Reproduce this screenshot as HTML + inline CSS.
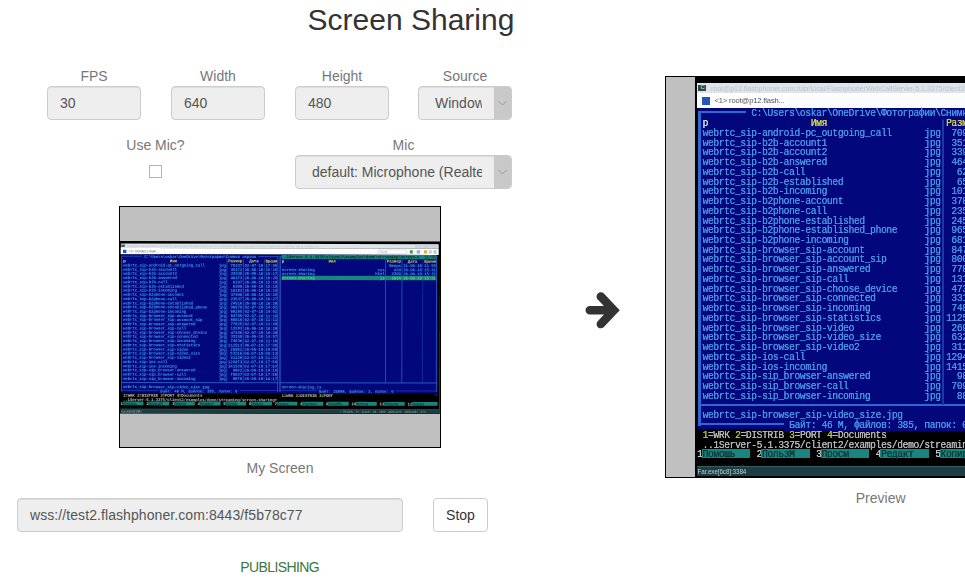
<!DOCTYPE html>
<html><head><meta charset="utf-8">
<style>
html,body{margin:0;padding:0;background:#fff;width:965px;height:585px;overflow:hidden;}
body{position:relative;font-family:"Liberation Sans",sans-serif;font-size:14px;color:#333;}
.a{position:absolute;white-space:nowrap;}
.lbl{position:absolute;color:#777;font-size:14px;line-height:20px;text-align:center;width:200px;}
.inp{position:absolute;box-sizing:border-box;height:34px;border:1px solid #ccc;border-radius:4px;background:#eee;color:#555;font-size:14px;line-height:32px;padding-left:12px;overflow:hidden;white-space:nowrap;box-shadow:inset 0 1px 1px rgba(0,0,0,.075);}
.sel{padding-left:16px;}
.sel .arr{position:absolute;right:0;top:0;width:17px;height:32px;background:#c9c9c9;border-radius:0 3px 3px 0;}
.sel .txt{position:absolute;left:16px;top:0;overflow:hidden;}
.box{position:absolute;border:1px solid #000;background:#c0c0c0;overflow:hidden;}
.scr{position:absolute;left:0;top:0;width:742px;height:400px;background:#000;transform-origin:0 0;overflow:hidden;}
.scr i,.scr b,.scr u{position:absolute;display:block;font-style:normal;text-decoration:none;white-space:pre;}
.scr i{font-family:"Liberation Mono",monospace;font-size:9.6px;letter-spacing:-0.35px;line-height:10.6px;height:9.73px;font-weight:normal;text-shadow:0.2px 0 0 currentColor;transform:scaleY(1.12);transform-origin:0 55%;}
.sm i{font-weight:bold;text-shadow:none;transform:none;text-rendering:geometricPrecision;}
.scr u{font-family:"Liberation Sans",sans-serif;}
</style></head><body>
<div class="a" style="left:0;top:3px;width:822px;text-align:center;font-size:30px;line-height:33px;color:#333">Screen Sharing</div>

<div class="lbl" style="left:-6px;top:66px">FPS</div>
<div class="lbl" style="left:118px;top:66px">Width</div>
<div class="lbl" style="left:242px;top:66px">Height</div>
<div class="lbl" style="left:365px;top:66px">Source</div>
<div class="inp" style="left:47px;top:86px;width:94px">30</div>
<div class="inp" style="left:171px;top:86px;width:94px">640</div>
<div class="inp" style="left:295px;top:86px;width:94px">480</div>
<div class="inp sel" style="left:418px;top:86px;width:94px"><span class="txt" style="width:47px">Window</span><span class="arr"><svg width="17" height="32" style="position:absolute;left:0;top:0"><path d="M4.5 14 L8.5 18 L12.5 14" fill="none" stroke="#9a9a9a" stroke-width="1"/></svg></span></div>

<div class="lbl" style="left:55.5px;top:135px">Use Mic?</div>
<div class="lbl" style="left:303.5px;top:135px">Mic</div>
<div class="a" style="left:149px;top:165px;width:11px;height:11px;border:1px solid #b4b4b4;background:#fff"></div>
<div class="inp sel" style="left:295px;top:155px;width:217px"><span class="txt" style="width:170px">default: Microphone (Realtek High Definition Audio)</span><span class="arr"><svg width="17" height="32" style="position:absolute;left:0;top:0"><path d="M4.5 14 L8.5 18 L12.5 14" fill="none" stroke="#9a9a9a" stroke-width="1"/></svg></span></div>

<div class="box" style="left:119px;top:206px;width:320px;height:240px">
<div style="position:absolute;left:0;top:0;width:320px;height:240px;filter:blur(0.2px)"><div class="scr sm" style="top:33.75px;transform:scale(0.43127) rotate(0.1deg)"><b style="left:1.50px;top:5.50px;width:737.50px;height:10.50px;background:#dde4ea"></b><b style="left:3.20px;top:7.50px;width:8.00px;height:6.50px;background:#2a4a48"></b><u style="left:5.5px;top:7.2px;color:#d0e0e0;font-size:6px;line-height:7px">C</u><u style="left:16px;top:7px;color:#bcc4cc;font-size:7px;line-height:9px">root@p12.flashphoner.com:/usr/local/FlashphonerWebCallServer-5.1.3375/client2/examples/demo/streaming/screen-sharing - Far 3.0.4545 x64</u><b style="left:684.00px;top:7.00px;width:16.00px;height:8.00px;background:#c8d4de"></b><b style="left:702.00px;top:7.00px;width:16.00px;height:8.00px;background:#c8d4de"></b><b style="left:720.00px;top:7.00px;width:16.00px;height:8.00px;background:#c8d4de"></b><b style="left:1.50px;top:16.00px;width:737.50px;height:15.00px;background:#fbfcfd"></b><b style="left:1.50px;top:16.00px;width:91.00px;height:15.00px;background:#ffffff"></b><b style="left:6.70px;top:20.00px;width:8.00px;height:8.00px;background:#2456c0"></b><u style="left:19.5px;top:19px;color:#50555c;font-size:7.6px;line-height:10px;letter-spacing:-0.15px">&lt;1&gt; root@p12.flash...</u><b style="left:598.00px;top:19.00px;width:67.00px;height:10.00px;background:#ffffff"></b><b style="left:598px;top:19px;width:65px;height:8px;border:1px solid #b8c0c8;background:#fff"></b><u style="left:601px;top:19px;color:#888;font-size:7px;line-height:9px">Поиск</u><b style="left:672.00px;top:20.00px;width:7.00px;height:8.00px;background:#3aa040"></b><b style="left:688.00px;top:20.00px;width:8.00px;height:8.00px;background:#8fb0d8"></b><b style="left:705.00px;top:20.00px;width:7.00px;height:8.00px;background:#e0b040"></b><b style="left:716.00px;top:20.00px;width:7.00px;height:8.00px;background:#c8ccd4"></b><b style="left:727.00px;top:20.00px;width:7.00px;height:8.00px;background:#a8c8e8"></b><b style="left:2.50px;top:31.30px;width:734.55px;height:321.09px;background:#02087c"></b><b style="left:2.50px;top:35.16px;width:2.30px;height:313.36px;background:#2858c0"></b><b style="left:364.98px;top:35.16px;width:2.30px;height:313.36px;background:#2858c0"></b><b style="left:2.50px;top:34.37px;width:365.47px;height:1.61px;background:#2858c0"></b><b style="left:2.50px;top:345.53px;width:365.47px;height:1.95px;background:#2858c0"></b><b style="left:2.50px;top:327.07px;width:365.47px;height:1.76px;background:#2858c0"></b><b style="left:247.16px;top:41.03px;width:1.60px;height:287.04px;background:#2850c0"></b><b style="left:285.02px;top:41.03px;width:1.60px;height:287.04px;background:#2850c0"></b><b style="left:333.71px;top:41.03px;width:1.60px;height:287.04px;background:#2850c0"></b><b style="left:370.38px;top:35.16px;width:2.30px;height:313.36px;background:#2858c0"></b><b style="left:732.86px;top:35.16px;width:2.30px;height:313.36px;background:#2858c0"></b><b style="left:370.38px;top:34.37px;width:365.47px;height:1.61px;background:#2858c0"></b><b style="left:370.38px;top:345.53px;width:365.47px;height:1.95px;background:#2858c0"></b><b style="left:370.38px;top:327.07px;width:365.47px;height:1.76px;background:#2858c0"></b><b style="left:615.04px;top:41.03px;width:1.60px;height:287.04px;background:#2850c0"></b><b style="left:652.91px;top:41.03px;width:1.60px;height:287.04px;background:#2850c0"></b><b style="left:701.60px;top:41.03px;width:1.60px;height:287.04px;background:#2850c0"></b><i style="left:50.79px;top:32.30px;color:#3f90ea;background:#02087c;"> C:\Users\oskar\OneDrive\Фотографии\Снимки экрана </i><i style="left:7.51px;top:42.05px;color:#d8dde6;">р</i><i style="left:115.71px;top:42.05px;color:#d6d24a;">Имя</i><i style="left:250.96px;top:42.05px;color:#d6d24a;">Размер</i><i style="left:299.65px;top:42.05px;color:#d6d24a;">Дата</i><i style="left:337.52px;top:42.05px;color:#d6d24a;">Время</i><i style="left:7.51px;top:51.79px;color:#3f90ea;">webrtc_sip-android-pc_outgoing_call</i><i style="left:229.32px;top:51.79px;color:#3f90ea;">jpg</i><i style="left:250.96px;top:51.79px;color:#3f90ea;"> 70937</i><i style="left:288.83px;top:51.79px;color:#3f90ea;">02-07-18</i><i style="left:337.52px;top:51.79px;color:#3f90ea;">17:56</i><i style="left:7.51px;top:61.54px;color:#3f90ea;">webrtc_sip-b2b-account1</i><i style="left:229.32px;top:61.54px;color:#3f90ea;">jpg</i><i style="left:250.96px;top:61.54px;color:#3f90ea;"> 35172</i><i style="left:288.83px;top:61.54px;color:#3f90ea;">26-06-18</i><i style="left:337.52px;top:61.54px;color:#3f90ea;">15:16</i><i style="left:7.51px;top:71.28px;color:#3f90ea;">webrtc_sip-b2b-account2</i><i style="left:229.32px;top:71.28px;color:#3f90ea;">jpg</i><i style="left:250.96px;top:71.28px;color:#3f90ea;"> 33930</i><i style="left:288.83px;top:71.28px;color:#3f90ea;">26-06-18</i><i style="left:337.52px;top:71.28px;color:#3f90ea;">15:17</i><i style="left:7.51px;top:81.03px;color:#3f90ea;">webrtc_sip-b2b-answered</i><i style="left:229.32px;top:81.03px;color:#3f90ea;">jpg</i><i style="left:250.96px;top:81.03px;color:#3f90ea;"> 46473</i><i style="left:288.83px;top:81.03px;color:#3f90ea;">26-06-18</i><i style="left:337.52px;top:81.03px;color:#3f90ea;">16:20</i><i style="left:7.51px;top:90.77px;color:#3f90ea;">webrtc_sip-b2b-call</i><i style="left:229.32px;top:90.77px;color:#3f90ea;">jpg</i><i style="left:250.96px;top:90.77px;color:#3f90ea;">  6297</i><i style="left:288.83px;top:90.77px;color:#3f90ea;">26-06-18</i><i style="left:337.52px;top:90.77px;color:#3f90ea;">15:18</i><i style="left:7.51px;top:100.52px;color:#3f90ea;">webrtc_sip-b2b-established</i><i style="left:229.32px;top:100.52px;color:#3f90ea;">jpg</i><i style="left:250.96px;top:100.52px;color:#3f90ea;">  6599</i><i style="left:288.83px;top:100.52px;color:#3f90ea;">26-06-18</i><i style="left:337.52px;top:100.52px;color:#3f90ea;">15:19</i><i style="left:7.51px;top:110.27px;color:#3f90ea;">webrtc_sip-b2b-incoming</i><i style="left:229.32px;top:110.27px;color:#3f90ea;">jpg</i><i style="left:250.96px;top:110.27px;color:#3f90ea;"> 10183</i><i style="left:288.83px;top:110.27px;color:#3f90ea;">26-06-18</i><i style="left:337.52px;top:110.27px;color:#3f90ea;">15:19</i><i style="left:7.51px;top:120.01px;color:#3f90ea;">webrtc_sip-b2phone-account</i><i style="left:229.32px;top:120.01px;color:#3f90ea;">jpg</i><i style="left:250.96px;top:120.01px;color:#3f90ea;"> 37896</i><i style="left:288.83px;top:120.01px;color:#3f90ea;">26-06-18</i><i style="left:337.52px;top:120.01px;color:#3f90ea;">16:25</i><i style="left:7.51px;top:129.76px;color:#3f90ea;">webrtc_sip-b2phone-call</i><i style="left:229.32px;top:129.76px;color:#3f90ea;">jpg</i><i style="left:250.96px;top:129.76px;color:#3f90ea;"> 23537</i><i style="left:288.83px;top:129.76px;color:#3f90ea;">26-06-18</i><i style="left:337.52px;top:129.76px;color:#3f90ea;">16:27</i><i style="left:7.51px;top:139.50px;color:#3f90ea;">webrtc_sip-b2phone-established</i><i style="left:229.32px;top:139.50px;color:#3f90ea;">jpg</i><i style="left:250.96px;top:139.50px;color:#3f90ea;"> 24516</i><i style="left:288.83px;top:139.50px;color:#3f90ea;">26-06-18</i><i style="left:337.52px;top:139.50px;color:#3f90ea;">16:28</i><i style="left:7.51px;top:149.25px;color:#3f90ea;">webrtc_sip-b2phone-established_phone</i><i style="left:229.32px;top:149.25px;color:#3f90ea;">jpg</i><i style="left:250.96px;top:149.25px;color:#3f90ea;"> 96579</i><i style="left:288.83px;top:149.25px;color:#3f90ea;">02-07-18</i><i style="left:337.52px;top:149.25px;color:#3f90ea;">14:02</i><i style="left:7.51px;top:158.99px;color:#3f90ea;">webrtc_sip-b2phone-incoming</i><i style="left:229.32px;top:158.99px;color:#3f90ea;">jpg</i><i style="left:250.96px;top:158.99px;color:#3f90ea;"> 68185</i><i style="left:288.83px;top:158.99px;color:#3f90ea;">02-07-18</i><i style="left:337.52px;top:158.99px;color:#3f90ea;">14:02</i><i style="left:7.51px;top:168.74px;color:#3f90ea;">webrtc_sip-browser_sip-account</i><i style="left:229.32px;top:168.74px;color:#3f90ea;">jpg</i><i style="left:250.96px;top:168.74px;color:#3f90ea;"> 84796</i><i style="left:288.83px;top:168.74px;color:#3f90ea;">02-07-18</i><i style="left:337.52px;top:168.74px;color:#3f90ea;">11:10</i><i style="left:7.51px;top:178.48px;color:#3f90ea;">webrtc_sip-browser_sip-account_sip</i><i style="left:229.32px;top:178.48px;color:#3f90ea;">jpg</i><i style="left:250.96px;top:178.48px;color:#3f90ea;"> 80016</i><i style="left:288.83px;top:178.48px;color:#3f90ea;">02-07-18</i><i style="left:337.52px;top:178.48px;color:#3f90ea;">11:11</i><i style="left:7.51px;top:188.23px;color:#3f90ea;">webrtc_sip-browser_sip-answered</i><i style="left:229.32px;top:188.23px;color:#3f90ea;">jpg</i><i style="left:250.96px;top:188.23px;color:#3f90ea;"> 77825</i><i style="left:288.83px;top:188.23px;color:#3f90ea;">02-07-18</i><i style="left:337.52px;top:188.23px;color:#3f90ea;">11:28</i><i style="left:7.51px;top:197.98px;color:#3f90ea;">webrtc_sip-browser_sip-call</i><i style="left:229.32px;top:197.98px;color:#3f90ea;">jpg</i><i style="left:250.96px;top:197.98px;color:#3f90ea;"> 13183</i><i style="left:288.83px;top:197.98px;color:#3f90ea;">26-06-18</i><i style="left:337.52px;top:197.98px;color:#3f90ea;">10:28</i><i style="left:7.51px;top:207.72px;color:#3f90ea;">webrtc_sip-browser_sip-choose_device</i><i style="left:229.32px;top:207.72px;color:#3f90ea;">jpg</i><i style="left:250.96px;top:207.72px;color:#3f90ea;"> 47356</i><i style="left:288.83px;top:207.72px;color:#3f90ea;">02-07-18</i><i style="left:337.52px;top:207.72px;color:#3f90ea;">10:28</i><i style="left:7.51px;top:217.47px;color:#3f90ea;">webrtc_sip-browser_sip-connected</i><i style="left:229.32px;top:217.47px;color:#3f90ea;">jpg</i><i style="left:250.96px;top:217.47px;color:#3f90ea;"> 33150</i><i style="left:288.83px;top:217.47px;color:#3f90ea;">26-06-18</i><i style="left:337.52px;top:217.47px;color:#3f90ea;">14:57</i><i style="left:7.51px;top:227.21px;color:#3f90ea;">webrtc_sip-browser_sip-incoming</i><i style="left:229.32px;top:227.21px;color:#3f90ea;">jpg</i><i style="left:250.96px;top:227.21px;color:#3f90ea;"> 74836</i><i style="left:288.83px;top:227.21px;color:#3f90ea;">02-07-18</i><i style="left:337.52px;top:227.21px;color:#3f90ea;">11:16</i><i style="left:7.51px;top:236.96px;color:#3f90ea;">webrtc_sip-browser_sip-statistics</i><i style="left:229.32px;top:236.96px;color:#3f90ea;">jpg</i><i style="left:250.96px;top:236.96px;color:#3f90ea;">112513</i><i style="left:288.83px;top:236.96px;color:#3f90ea;">06-07-18</i><i style="left:337.52px;top:236.96px;color:#3f90ea;">17:36</i><i style="left:7.51px;top:246.70px;color:#3f90ea;">webrtc_sip-browser_sip-video</i><i style="left:229.32px;top:246.70px;color:#3f90ea;">jpg</i><i style="left:250.96px;top:246.70px;color:#3f90ea;"> 26982</i><i style="left:288.83px;top:246.70px;color:#3f90ea;">26-06-18</i><i style="left:337.52px;top:246.70px;color:#3f90ea;">10:09</i><i style="left:7.51px;top:256.45px;color:#3f90ea;">webrtc_sip-browser_sip-video_size</i><i style="left:229.32px;top:256.45px;color:#3f90ea;">jpg</i><i style="left:250.96px;top:256.45px;color:#3f90ea;"> 63216</i><i style="left:288.83px;top:256.45px;color:#3f90ea;">06-07-18</i><i style="left:337.52px;top:256.45px;color:#3f90ea;">09:13</i><i style="left:7.51px;top:266.19px;color:#3f90ea;">webrtc_sip-browser_sip-video2</i><i style="left:229.32px;top:266.19px;color:#3f90ea;">jpg</i><i style="left:250.96px;top:266.19px;color:#3f90ea;"> 31138</i><i style="left:288.83px;top:266.19px;color:#3f90ea;">02-07-18</i><i style="left:337.52px;top:266.19px;color:#3f90ea;">11:32</i><i style="left:7.51px;top:275.94px;color:#3f90ea;">webrtc_sip-ios-call</i><i style="left:229.32px;top:275.94px;color:#3f90ea;">jpg</i><i style="left:250.96px;top:275.94px;color:#3f90ea;">129473</i><i style="left:288.83px;top:275.94px;color:#3f90ea;">02-07-18</i><i style="left:337.52px;top:275.94px;color:#3f90ea;">17:56</i><i style="left:7.51px;top:285.69px;color:#3f90ea;">webrtc_sip-ios-incoming</i><i style="left:229.32px;top:285.69px;color:#3f90ea;">jpg</i><i style="left:250.96px;top:285.69px;color:#3f90ea;">141530</i><i style="left:288.83px;top:285.69px;color:#3f90ea;">02-07-18</i><i style="left:337.52px;top:285.69px;color:#3f90ea;">17:57</i><i style="left:7.51px;top:295.43px;color:#3f90ea;">webrtc_sip-sip_browser-answered</i><i style="left:229.32px;top:295.43px;color:#3f90ea;">jpg</i><i style="left:250.96px;top:295.43px;color:#3f90ea;">  9842</i><i style="left:288.83px;top:295.43px;color:#3f90ea;">26-06-18</i><i style="left:337.52px;top:295.43px;color:#3f90ea;">10:16</i><i style="left:7.51px;top:305.18px;color:#3f90ea;">webrtc_sip-sip_browser-call</i><i style="left:229.32px;top:305.18px;color:#3f90ea;">jpg</i><i style="left:250.96px;top:305.18px;color:#3f90ea;"> 70937</i><i style="left:288.83px;top:305.18px;color:#3f90ea;">02-07-18</i><i style="left:337.52px;top:305.18px;color:#3f90ea;">17:56</i><i style="left:7.51px;top:314.92px;color:#3f90ea;">webrtc_sip-sip_browser-incoming</i><i style="left:229.32px;top:314.92px;color:#3f90ea;">jpg</i><i style="left:250.96px;top:314.92px;color:#3f90ea;">  8879</i><i style="left:288.83px;top:314.92px;color:#3f90ea;">26-06-18</i><i style="left:337.52px;top:314.92px;color:#3f90ea;">10:17</i><i style="left:7.51px;top:334.41px;color:#3f90ea;">webrtc_sip-browser_sip-video_size.jpg</i><i style="left:88.66px;top:344.16px;color:#3f90ea;background:#02087c;"> Байт: 46 М, файлов: 385, папок: 0 </i><b style="left:374.59px;top:31.30px;width:359.76px;height:9.73px;background:#1a847e"></b><i style="left:375.39px;top:32.30px;color:#062a28;"> …1Server-5.1.3375\client2\examples\demo\streaming\screen-s </i><i style="left:705.40px;top:32.30px;color:#0a3a38;">11:55</i><i style="left:375.39px;top:42.05px;color:#d8dde6;">р</i><i style="left:483.59px;top:42.05px;color:#d6d24a;">Имя</i><i style="left:618.84px;top:42.05px;color:#d6d24a;">Размер</i><i style="left:667.53px;top:42.05px;color:#d6d24a;">Дата</i><i style="left:705.40px;top:42.05px;color:#d6d24a;">Время</i><i style="left:375.39px;top:51.79px;color:#3f90ea;">..</i><i style="left:618.84px;top:51.79px;color:#3f90ea;"> Вверх</i><i style="left:656.71px;top:51.79px;color:#3f90ea;">21-06-18</i><i style="left:705.40px;top:51.79px;color:#3f90ea;">11:55</i><i style="left:375.39px;top:61.54px;color:#3f90ea;">screen-sharing</i><i style="left:597.20px;top:61.54px;color:#3f90ea;">css</i><i style="left:618.84px;top:61.54px;color:#3f90ea;">   434</i><i style="left:656.71px;top:61.54px;color:#3f90ea;">26-06-18</i><i style="left:705.40px;top:61.54px;color:#3f90ea;">15:31</i><i style="left:375.39px;top:71.28px;color:#3f90ea;">screen-sharing</i><i style="left:591.79px;top:71.28px;color:#3f90ea;">html</i><i style="left:618.84px;top:71.28px;color:#3f90ea;">  2300</i><i style="left:656.71px;top:71.28px;color:#3f90ea;">26-06-18</i><i style="left:705.40px;top:71.28px;color:#3f90ea;">15:31</i><b style="left:374.59px;top:79.95px;width:357.06px;height:9.73px;background:#1a847e"></b><i style="left:375.39px;top:81.03px;color:#58d068;">screen-sharing</i><i style="left:602.61px;top:81.03px;color:#58d068;">js</i><i style="left:618.84px;top:81.03px;color:#58d068;">  5654</i><i style="left:656.71px;top:81.03px;color:#58d068;">26-06-18</i><i style="left:705.40px;top:81.03px;color:#58d068;">15:31</i><i style="left:375.39px;top:334.41px;color:#3f90ea;">screen-sharing.js</i><i style="left:456.54px;top:344.16px;color:#3f90ea;background:#02087c;"> Байт: 15888, файлов: 3, папок: 0 </i><i style="left:7.51px;top:353.91px;color:#c4bc3c;">1</i><i style="left:12.92px;top:353.91px;color:#b8b8b8;">=WRK </i><i style="left:39.97px;top:353.91px;color:#c4bc3c;">2</i><i style="left:45.38px;top:353.91px;color:#b8b8b8;">=DISTRIB </i><i style="left:94.07px;top:353.91px;color:#c4bc3c;">3</i><i style="left:99.48px;top:353.91px;color:#b8b8b8;">=PORT </i><i style="left:131.94px;top:353.91px;color:#c4bc3c;">4</i><i style="left:137.35px;top:353.91px;color:#b8b8b8;">=Documents</i><i style="left:375.39px;top:353.91px;color:#c4bc3c;">1</i><i style="left:380.80px;top:353.91px;color:#b8b8b8;">=WRK </i><i style="left:407.85px;top:353.91px;color:#c4bc3c;">2</i><i style="left:413.26px;top:353.91px;color:#b8b8b8;">=DISTRIB </i><i style="left:461.95px;top:353.91px;color:#c4bc3c;">3</i><i style="left:467.36px;top:353.91px;color:#b8b8b8;">=PORT </i><i style="left:7.51px;top:363.65px;color:#b8b8b8;">..1Server-5.1.3375/client2/examples/demo/streaming/screen-sharing&gt;</i><i style="left:2.10px;top:373.40px;color:#c8c8c8;">1</i><b style="left:6.71px;top:372.35px;width:48.69px;height:8.73px;background:#1a847e"></b><i style="left:7.51px;top:373.40px;color:#0a3a38;">Помощь</i><i style="left:61.61px;top:373.40px;color:#c8c8c8;">2</i><b style="left:66.22px;top:372.35px;width:48.69px;height:8.73px;background:#1a847e"></b><i style="left:67.02px;top:373.40px;color:#0a3a38;">ПользМ</i><i style="left:121.12px;top:373.40px;color:#c8c8c8;">3</i><b style="left:125.73px;top:372.35px;width:48.69px;height:8.73px;background:#1a847e"></b><i style="left:126.53px;top:373.40px;color:#0a3a38;">Просм</i><i style="left:180.63px;top:373.40px;color:#c8c8c8;">4</i><b style="left:185.24px;top:372.35px;width:48.69px;height:8.73px;background:#1a847e"></b><i style="left:186.04px;top:373.40px;color:#0a3a38;">Редакт</i><i style="left:240.14px;top:373.40px;color:#c8c8c8;">5</i><b style="left:244.75px;top:372.35px;width:48.69px;height:8.73px;background:#1a847e"></b><i style="left:245.55px;top:373.40px;color:#0a3a38;">Копир</i><i style="left:299.65px;top:373.40px;color:#c8c8c8;">6</i><b style="left:304.26px;top:372.35px;width:48.69px;height:8.73px;background:#1a847e"></b><i style="left:305.06px;top:373.40px;color:#0a3a38;">Перен</i><i style="left:359.16px;top:373.40px;color:#c8c8c8;">7</i><b style="left:363.77px;top:372.35px;width:48.69px;height:8.73px;background:#1a847e"></b><i style="left:364.57px;top:373.40px;color:#0a3a38;">Папка</i><i style="left:418.67px;top:373.40px;color:#c8c8c8;">8</i><b style="left:423.28px;top:372.35px;width:48.69px;height:8.73px;background:#1a847e"></b><i style="left:424.08px;top:373.40px;color:#0a3a38;">Удален</i><i style="left:478.18px;top:373.40px;color:#c8c8c8;">9</i><b style="left:482.79px;top:372.35px;width:48.69px;height:8.73px;background:#1a847e"></b><i style="left:483.59px;top:373.40px;color:#0a3a38;">КонфМн</i><i style="left:537.69px;top:373.40px;color:#c8c8c8;">10</i><b style="left:547.71px;top:372.35px;width:48.69px;height:8.73px;background:#1a847e"></b><i style="left:548.51px;top:373.40px;color:#0a3a38;">Выход</i><i style="left:602.61px;top:373.40px;color:#c8c8c8;">11</i><b style="left:612.63px;top:372.35px;width:48.69px;height:8.73px;background:#1a847e"></b><i style="left:613.43px;top:373.40px;color:#0a3a38;">Модули</i><i style="left:667.53px;top:373.40px;color:#c8c8c8;">12</i><b style="left:677.55px;top:372.35px;width:59.51px;height:8.73px;background:#1a847e"></b><i style="left:678.35px;top:373.40px;color:#0a3a38;">Экран</i><b style="left:732.00px;top:354.00px;width:3.00px;height:3.00px;background:#3050d0"></b><b style="left:1.50px;top:388.80px;width:740.50px;height:10.20px;background:#1c3d42"></b><b style="left:1.50px;top:388.80px;width:740.50px;height:1.00px;background:#345f66"></b><u style="left:2.5px;top:389.5px;color:#c0d0d4;font-size:6.3px;line-height:9px;letter-spacing:-0.1px">Far.exe[6c8]:3384</u><u style="left:511px;top:389.5px;color:#98b0b4;font-size:6.3px;line-height:9px;word-spacing:1.5px">« ОБЩИЕ  97  2x1137  96  1960  2820x1376  1960x1084  84%</u></div></div>
</div>
<div class="lbl" style="left:180px;top:458px">My Screen</div>

<svg class="a" style="left:580px;top:285px" width="50" height="50" viewBox="580 285 50 50"><path d="M589.8 310.3 L612 310.3 M600.8 296.5 L613.9 310.3 L600.8 324.1" fill="none" stroke="#333" stroke-width="8.5" stroke-linecap="round" stroke-linejoin="miter"/></svg>

<div class="box" style="left:665px;top:76px;width:800px;height:400px">
<div class="scr" style="left:29px;top:0;filter:blur(0.35px)"><b style="left:1.50px;top:5.50px;width:737.50px;height:10.50px;background:#dde4ea"></b><b style="left:3.20px;top:7.50px;width:8.00px;height:6.50px;background:#2a4a48"></b><u style="left:5.5px;top:7.2px;color:#d0e0e0;font-size:6px;line-height:7px">C</u><u style="left:16px;top:7px;color:#bcc4cc;font-size:7px;line-height:9px">root@p12.flashphoner.com:/usr/local/FlashphonerWebCallServer-5.1.3375/client2/examples/demo/streaming/screen-sharing - Far 3.0.4545 x64</u><b style="left:684.00px;top:7.00px;width:16.00px;height:8.00px;background:#c8d4de"></b><b style="left:702.00px;top:7.00px;width:16.00px;height:8.00px;background:#c8d4de"></b><b style="left:720.00px;top:7.00px;width:16.00px;height:8.00px;background:#c8d4de"></b><b style="left:1.50px;top:16.00px;width:737.50px;height:15.00px;background:#fbfcfd"></b><b style="left:1.50px;top:16.00px;width:91.00px;height:15.00px;background:#ffffff"></b><b style="left:6.70px;top:20.00px;width:8.00px;height:8.00px;background:#2456c0"></b><u style="left:19.5px;top:19px;color:#50555c;font-size:7.6px;line-height:10px;letter-spacing:-0.15px">&lt;1&gt; root@p12.flash...</u><b style="left:598.00px;top:19.00px;width:67.00px;height:10.00px;background:#ffffff"></b><b style="left:598px;top:19px;width:65px;height:8px;border:1px solid #b8c0c8;background:#fff"></b><u style="left:601px;top:19px;color:#888;font-size:7px;line-height:9px">Поиск</u><b style="left:672.00px;top:20.00px;width:7.00px;height:8.00px;background:#3aa040"></b><b style="left:688.00px;top:20.00px;width:8.00px;height:8.00px;background:#8fb0d8"></b><b style="left:705.00px;top:20.00px;width:7.00px;height:8.00px;background:#e0b040"></b><b style="left:716.00px;top:20.00px;width:7.00px;height:8.00px;background:#c8ccd4"></b><b style="left:727.00px;top:20.00px;width:7.00px;height:8.00px;background:#a8c8e8"></b><b style="left:2.50px;top:31.30px;width:734.55px;height:321.09px;background:#02087c"></b><b style="left:2.50px;top:35.16px;width:3.00px;height:313.36px;background:#2e68d8"></b><b style="left:364.98px;top:35.16px;width:3.00px;height:313.36px;background:#2e68d8"></b><b style="left:2.50px;top:34.37px;width:365.47px;height:2.10px;background:#2e68d8"></b><b style="left:2.50px;top:345.53px;width:365.47px;height:2.55px;background:#2e68d8"></b><b style="left:2.50px;top:327.07px;width:365.47px;height:2.42px;background:#2e68d8"></b><b style="left:246.86px;top:41.03px;width:2.20px;height:287.04px;background:#1c38a4"></b><b style="left:284.72px;top:41.03px;width:2.20px;height:287.04px;background:#1c38a4"></b><b style="left:333.41px;top:41.03px;width:2.20px;height:287.04px;background:#1c38a4"></b><b style="left:370.38px;top:35.16px;width:3.00px;height:313.36px;background:#2e68d8"></b><b style="left:732.86px;top:35.16px;width:3.00px;height:313.36px;background:#2e68d8"></b><b style="left:370.38px;top:34.37px;width:365.47px;height:2.10px;background:#2e68d8"></b><b style="left:370.38px;top:345.53px;width:365.47px;height:2.55px;background:#2e68d8"></b><b style="left:370.38px;top:327.07px;width:365.47px;height:2.42px;background:#2e68d8"></b><b style="left:614.74px;top:41.03px;width:2.20px;height:287.04px;background:#1c38a4"></b><b style="left:652.61px;top:41.03px;width:2.20px;height:287.04px;background:#1c38a4"></b><b style="left:701.29px;top:41.03px;width:2.20px;height:287.04px;background:#1c38a4"></b><i style="left:50.79px;top:32.30px;color:#4894e8;background:#02087c;"> C:\Users\oskar\OneDrive\Фотографии\Снимки экрана </i><i style="left:7.51px;top:42.05px;color:#d8dde6;">р</i><i style="left:115.71px;top:42.05px;color:#d6d24a;">Имя</i><i style="left:250.96px;top:42.05px;color:#d6d24a;">Размер</i><i style="left:299.65px;top:42.05px;color:#d6d24a;">Дата</i><i style="left:337.52px;top:42.05px;color:#d6d24a;">Время</i><i style="left:7.51px;top:51.79px;color:#4894e8;">webrtc_sip-android-pc_outgoing_call</i><i style="left:229.32px;top:51.79px;color:#4894e8;">jpg</i><i style="left:250.96px;top:51.79px;color:#4894e8;"> 70937</i><i style="left:288.83px;top:51.79px;color:#4894e8;">02-07-18</i><i style="left:337.52px;top:51.79px;color:#4894e8;">17:56</i><i style="left:7.51px;top:61.54px;color:#4894e8;">webrtc_sip-b2b-account1</i><i style="left:229.32px;top:61.54px;color:#4894e8;">jpg</i><i style="left:250.96px;top:61.54px;color:#4894e8;"> 35172</i><i style="left:288.83px;top:61.54px;color:#4894e8;">26-06-18</i><i style="left:337.52px;top:61.54px;color:#4894e8;">15:16</i><i style="left:7.51px;top:71.28px;color:#4894e8;">webrtc_sip-b2b-account2</i><i style="left:229.32px;top:71.28px;color:#4894e8;">jpg</i><i style="left:250.96px;top:71.28px;color:#4894e8;"> 33930</i><i style="left:288.83px;top:71.28px;color:#4894e8;">26-06-18</i><i style="left:337.52px;top:71.28px;color:#4894e8;">15:17</i><i style="left:7.51px;top:81.03px;color:#4894e8;">webrtc_sip-b2b-answered</i><i style="left:229.32px;top:81.03px;color:#4894e8;">jpg</i><i style="left:250.96px;top:81.03px;color:#4894e8;"> 46473</i><i style="left:288.83px;top:81.03px;color:#4894e8;">26-06-18</i><i style="left:337.52px;top:81.03px;color:#4894e8;">16:20</i><i style="left:7.51px;top:90.77px;color:#4894e8;">webrtc_sip-b2b-call</i><i style="left:229.32px;top:90.77px;color:#4894e8;">jpg</i><i style="left:250.96px;top:90.77px;color:#4894e8;">  6297</i><i style="left:288.83px;top:90.77px;color:#4894e8;">26-06-18</i><i style="left:337.52px;top:90.77px;color:#4894e8;">15:18</i><i style="left:7.51px;top:100.52px;color:#4894e8;">webrtc_sip-b2b-established</i><i style="left:229.32px;top:100.52px;color:#4894e8;">jpg</i><i style="left:250.96px;top:100.52px;color:#4894e8;">  6599</i><i style="left:288.83px;top:100.52px;color:#4894e8;">26-06-18</i><i style="left:337.52px;top:100.52px;color:#4894e8;">15:19</i><i style="left:7.51px;top:110.27px;color:#4894e8;">webrtc_sip-b2b-incoming</i><i style="left:229.32px;top:110.27px;color:#4894e8;">jpg</i><i style="left:250.96px;top:110.27px;color:#4894e8;"> 10183</i><i style="left:288.83px;top:110.27px;color:#4894e8;">26-06-18</i><i style="left:337.52px;top:110.27px;color:#4894e8;">15:19</i><i style="left:7.51px;top:120.01px;color:#4894e8;">webrtc_sip-b2phone-account</i><i style="left:229.32px;top:120.01px;color:#4894e8;">jpg</i><i style="left:250.96px;top:120.01px;color:#4894e8;"> 37896</i><i style="left:288.83px;top:120.01px;color:#4894e8;">26-06-18</i><i style="left:337.52px;top:120.01px;color:#4894e8;">16:25</i><i style="left:7.51px;top:129.76px;color:#4894e8;">webrtc_sip-b2phone-call</i><i style="left:229.32px;top:129.76px;color:#4894e8;">jpg</i><i style="left:250.96px;top:129.76px;color:#4894e8;"> 23537</i><i style="left:288.83px;top:129.76px;color:#4894e8;">26-06-18</i><i style="left:337.52px;top:129.76px;color:#4894e8;">16:27</i><i style="left:7.51px;top:139.50px;color:#4894e8;">webrtc_sip-b2phone-established</i><i style="left:229.32px;top:139.50px;color:#4894e8;">jpg</i><i style="left:250.96px;top:139.50px;color:#4894e8;"> 24516</i><i style="left:288.83px;top:139.50px;color:#4894e8;">26-06-18</i><i style="left:337.52px;top:139.50px;color:#4894e8;">16:28</i><i style="left:7.51px;top:149.25px;color:#4894e8;">webrtc_sip-b2phone-established_phone</i><i style="left:229.32px;top:149.25px;color:#4894e8;">jpg</i><i style="left:250.96px;top:149.25px;color:#4894e8;"> 96579</i><i style="left:288.83px;top:149.25px;color:#4894e8;">02-07-18</i><i style="left:337.52px;top:149.25px;color:#4894e8;">14:02</i><i style="left:7.51px;top:158.99px;color:#4894e8;">webrtc_sip-b2phone-incoming</i><i style="left:229.32px;top:158.99px;color:#4894e8;">jpg</i><i style="left:250.96px;top:158.99px;color:#4894e8;"> 68185</i><i style="left:288.83px;top:158.99px;color:#4894e8;">02-07-18</i><i style="left:337.52px;top:158.99px;color:#4894e8;">14:02</i><i style="left:7.51px;top:168.74px;color:#4894e8;">webrtc_sip-browser_sip-account</i><i style="left:229.32px;top:168.74px;color:#4894e8;">jpg</i><i style="left:250.96px;top:168.74px;color:#4894e8;"> 84796</i><i style="left:288.83px;top:168.74px;color:#4894e8;">02-07-18</i><i style="left:337.52px;top:168.74px;color:#4894e8;">11:10</i><i style="left:7.51px;top:178.48px;color:#4894e8;">webrtc_sip-browser_sip-account_sip</i><i style="left:229.32px;top:178.48px;color:#4894e8;">jpg</i><i style="left:250.96px;top:178.48px;color:#4894e8;"> 80016</i><i style="left:288.83px;top:178.48px;color:#4894e8;">02-07-18</i><i style="left:337.52px;top:178.48px;color:#4894e8;">11:11</i><i style="left:7.51px;top:188.23px;color:#4894e8;">webrtc_sip-browser_sip-answered</i><i style="left:229.32px;top:188.23px;color:#4894e8;">jpg</i><i style="left:250.96px;top:188.23px;color:#4894e8;"> 77825</i><i style="left:288.83px;top:188.23px;color:#4894e8;">02-07-18</i><i style="left:337.52px;top:188.23px;color:#4894e8;">11:28</i><i style="left:7.51px;top:197.98px;color:#4894e8;">webrtc_sip-browser_sip-call</i><i style="left:229.32px;top:197.98px;color:#4894e8;">jpg</i><i style="left:250.96px;top:197.98px;color:#4894e8;"> 13183</i><i style="left:288.83px;top:197.98px;color:#4894e8;">26-06-18</i><i style="left:337.52px;top:197.98px;color:#4894e8;">10:28</i><i style="left:7.51px;top:207.72px;color:#4894e8;">webrtc_sip-browser_sip-choose_device</i><i style="left:229.32px;top:207.72px;color:#4894e8;">jpg</i><i style="left:250.96px;top:207.72px;color:#4894e8;"> 47356</i><i style="left:288.83px;top:207.72px;color:#4894e8;">02-07-18</i><i style="left:337.52px;top:207.72px;color:#4894e8;">10:28</i><i style="left:7.51px;top:217.47px;color:#4894e8;">webrtc_sip-browser_sip-connected</i><i style="left:229.32px;top:217.47px;color:#4894e8;">jpg</i><i style="left:250.96px;top:217.47px;color:#4894e8;"> 33150</i><i style="left:288.83px;top:217.47px;color:#4894e8;">26-06-18</i><i style="left:337.52px;top:217.47px;color:#4894e8;">14:57</i><i style="left:7.51px;top:227.21px;color:#4894e8;">webrtc_sip-browser_sip-incoming</i><i style="left:229.32px;top:227.21px;color:#4894e8;">jpg</i><i style="left:250.96px;top:227.21px;color:#4894e8;"> 74836</i><i style="left:288.83px;top:227.21px;color:#4894e8;">02-07-18</i><i style="left:337.52px;top:227.21px;color:#4894e8;">11:16</i><i style="left:7.51px;top:236.96px;color:#4894e8;">webrtc_sip-browser_sip-statistics</i><i style="left:229.32px;top:236.96px;color:#4894e8;">jpg</i><i style="left:250.96px;top:236.96px;color:#4894e8;">112513</i><i style="left:288.83px;top:236.96px;color:#4894e8;">06-07-18</i><i style="left:337.52px;top:236.96px;color:#4894e8;">17:36</i><i style="left:7.51px;top:246.70px;color:#4894e8;">webrtc_sip-browser_sip-video</i><i style="left:229.32px;top:246.70px;color:#4894e8;">jpg</i><i style="left:250.96px;top:246.70px;color:#4894e8;"> 26982</i><i style="left:288.83px;top:246.70px;color:#4894e8;">26-06-18</i><i style="left:337.52px;top:246.70px;color:#4894e8;">10:09</i><i style="left:7.51px;top:256.45px;color:#4894e8;">webrtc_sip-browser_sip-video_size</i><i style="left:229.32px;top:256.45px;color:#4894e8;">jpg</i><i style="left:250.96px;top:256.45px;color:#4894e8;"> 63216</i><i style="left:288.83px;top:256.45px;color:#4894e8;">06-07-18</i><i style="left:337.52px;top:256.45px;color:#4894e8;">09:13</i><i style="left:7.51px;top:266.19px;color:#4894e8;">webrtc_sip-browser_sip-video2</i><i style="left:229.32px;top:266.19px;color:#4894e8;">jpg</i><i style="left:250.96px;top:266.19px;color:#4894e8;"> 31138</i><i style="left:288.83px;top:266.19px;color:#4894e8;">02-07-18</i><i style="left:337.52px;top:266.19px;color:#4894e8;">11:32</i><i style="left:7.51px;top:275.94px;color:#4894e8;">webrtc_sip-ios-call</i><i style="left:229.32px;top:275.94px;color:#4894e8;">jpg</i><i style="left:250.96px;top:275.94px;color:#4894e8;">129473</i><i style="left:288.83px;top:275.94px;color:#4894e8;">02-07-18</i><i style="left:337.52px;top:275.94px;color:#4894e8;">17:56</i><i style="left:7.51px;top:285.69px;color:#4894e8;">webrtc_sip-ios-incoming</i><i style="left:229.32px;top:285.69px;color:#4894e8;">jpg</i><i style="left:250.96px;top:285.69px;color:#4894e8;">141530</i><i style="left:288.83px;top:285.69px;color:#4894e8;">02-07-18</i><i style="left:337.52px;top:285.69px;color:#4894e8;">17:57</i><i style="left:7.51px;top:295.43px;color:#4894e8;">webrtc_sip-sip_browser-answered</i><i style="left:229.32px;top:295.43px;color:#4894e8;">jpg</i><i style="left:250.96px;top:295.43px;color:#4894e8;">  9842</i><i style="left:288.83px;top:295.43px;color:#4894e8;">26-06-18</i><i style="left:337.52px;top:295.43px;color:#4894e8;">10:16</i><i style="left:7.51px;top:305.18px;color:#4894e8;">webrtc_sip-sip_browser-call</i><i style="left:229.32px;top:305.18px;color:#4894e8;">jpg</i><i style="left:250.96px;top:305.18px;color:#4894e8;"> 70937</i><i style="left:288.83px;top:305.18px;color:#4894e8;">02-07-18</i><i style="left:337.52px;top:305.18px;color:#4894e8;">17:56</i><i style="left:7.51px;top:314.92px;color:#4894e8;">webrtc_sip-sip_browser-incoming</i><i style="left:229.32px;top:314.92px;color:#4894e8;">jpg</i><i style="left:250.96px;top:314.92px;color:#4894e8;">  8879</i><i style="left:288.83px;top:314.92px;color:#4894e8;">26-06-18</i><i style="left:337.52px;top:314.92px;color:#4894e8;">10:17</i><i style="left:7.51px;top:334.41px;color:#4894e8;">webrtc_sip-browser_sip-video_size.jpg</i><i style="left:88.66px;top:344.16px;color:#4894e8;background:#02087c;"> Байт: 46 М, файлов: 385, папок: 0 </i><b style="left:374.59px;top:31.30px;width:359.76px;height:9.73px;background:#1a847e"></b><i style="left:375.39px;top:32.30px;color:#062a28;"> …1Server-5.1.3375\client2\examples\demo\streaming\screen-s </i><i style="left:705.40px;top:32.30px;color:#0a3a38;">11:55</i><i style="left:375.39px;top:42.05px;color:#d8dde6;">р</i><i style="left:483.59px;top:42.05px;color:#d6d24a;">Имя</i><i style="left:618.84px;top:42.05px;color:#d6d24a;">Размер</i><i style="left:667.53px;top:42.05px;color:#d6d24a;">Дата</i><i style="left:705.40px;top:42.05px;color:#d6d24a;">Время</i><i style="left:375.39px;top:51.79px;color:#4894e8;">..</i><i style="left:618.84px;top:51.79px;color:#4894e8;"> Вверх</i><i style="left:656.71px;top:51.79px;color:#4894e8;">21-06-18</i><i style="left:705.40px;top:51.79px;color:#4894e8;">11:55</i><i style="left:375.39px;top:61.54px;color:#4894e8;">screen-sharing</i><i style="left:597.20px;top:61.54px;color:#4894e8;">css</i><i style="left:618.84px;top:61.54px;color:#4894e8;">   434</i><i style="left:656.71px;top:61.54px;color:#4894e8;">26-06-18</i><i style="left:705.40px;top:61.54px;color:#4894e8;">15:31</i><i style="left:375.39px;top:71.28px;color:#4894e8;">screen-sharing</i><i style="left:591.79px;top:71.28px;color:#4894e8;">html</i><i style="left:618.84px;top:71.28px;color:#4894e8;">  2300</i><i style="left:656.71px;top:71.28px;color:#4894e8;">26-06-18</i><i style="left:705.40px;top:71.28px;color:#4894e8;">15:31</i><b style="left:374.59px;top:79.95px;width:357.06px;height:9.73px;background:#1a847e"></b><i style="left:375.39px;top:81.03px;color:#58d068;">screen-sharing</i><i style="left:602.61px;top:81.03px;color:#58d068;">js</i><i style="left:618.84px;top:81.03px;color:#58d068;">  5654</i><i style="left:656.71px;top:81.03px;color:#58d068;">26-06-18</i><i style="left:705.40px;top:81.03px;color:#58d068;">15:31</i><i style="left:375.39px;top:334.41px;color:#4894e8;">screen-sharing.js</i><i style="left:456.54px;top:344.16px;color:#4894e8;background:#02087c;"> Байт: 15888, файлов: 3, папок: 0 </i><i style="left:7.51px;top:353.91px;color:#c4bc3c;">1</i><i style="left:12.92px;top:353.91px;color:#b8b8b8;">=WRK </i><i style="left:39.97px;top:353.91px;color:#c4bc3c;">2</i><i style="left:45.38px;top:353.91px;color:#b8b8b8;">=DISTRIB </i><i style="left:94.07px;top:353.91px;color:#c4bc3c;">3</i><i style="left:99.48px;top:353.91px;color:#b8b8b8;">=PORT </i><i style="left:131.94px;top:353.91px;color:#c4bc3c;">4</i><i style="left:137.35px;top:353.91px;color:#b8b8b8;">=Documents</i><i style="left:375.39px;top:353.91px;color:#c4bc3c;">1</i><i style="left:380.80px;top:353.91px;color:#b8b8b8;">=WRK </i><i style="left:407.85px;top:353.91px;color:#c4bc3c;">2</i><i style="left:413.26px;top:353.91px;color:#b8b8b8;">=DISTRIB </i><i style="left:461.95px;top:353.91px;color:#c4bc3c;">3</i><i style="left:467.36px;top:353.91px;color:#b8b8b8;">=PORT </i><i style="left:7.51px;top:363.65px;color:#b8b8b8;">..1Server-5.1.3375/client2/examples/demo/streaming/screen-sharing&gt;</i><i style="left:2.10px;top:373.40px;color:#c8c8c8;">1</i><b style="left:6.71px;top:372.35px;width:48.69px;height:8.73px;background:#1a847e"></b><i style="left:7.51px;top:373.40px;color:#0a3a38;">Помощь</i><i style="left:61.61px;top:373.40px;color:#c8c8c8;">2</i><b style="left:66.22px;top:372.35px;width:48.69px;height:8.73px;background:#1a847e"></b><i style="left:67.02px;top:373.40px;color:#0a3a38;">ПользМ</i><i style="left:121.12px;top:373.40px;color:#c8c8c8;">3</i><b style="left:125.73px;top:372.35px;width:48.69px;height:8.73px;background:#1a847e"></b><i style="left:126.53px;top:373.40px;color:#0a3a38;">Просм</i><i style="left:180.63px;top:373.40px;color:#c8c8c8;">4</i><b style="left:185.24px;top:372.35px;width:48.69px;height:8.73px;background:#1a847e"></b><i style="left:186.04px;top:373.40px;color:#0a3a38;">Редакт</i><i style="left:240.14px;top:373.40px;color:#c8c8c8;">5</i><b style="left:244.75px;top:372.35px;width:48.69px;height:8.73px;background:#1a847e"></b><i style="left:245.55px;top:373.40px;color:#0a3a38;">Копир</i><i style="left:299.65px;top:373.40px;color:#c8c8c8;">6</i><b style="left:304.26px;top:372.35px;width:48.69px;height:8.73px;background:#1a847e"></b><i style="left:305.06px;top:373.40px;color:#0a3a38;">Перен</i><i style="left:359.16px;top:373.40px;color:#c8c8c8;">7</i><b style="left:363.77px;top:372.35px;width:48.69px;height:8.73px;background:#1a847e"></b><i style="left:364.57px;top:373.40px;color:#0a3a38;">Папка</i><i style="left:418.67px;top:373.40px;color:#c8c8c8;">8</i><b style="left:423.28px;top:372.35px;width:48.69px;height:8.73px;background:#1a847e"></b><i style="left:424.08px;top:373.40px;color:#0a3a38;">Удален</i><i style="left:478.18px;top:373.40px;color:#c8c8c8;">9</i><b style="left:482.79px;top:372.35px;width:48.69px;height:8.73px;background:#1a847e"></b><i style="left:483.59px;top:373.40px;color:#0a3a38;">КонфМн</i><i style="left:537.69px;top:373.40px;color:#c8c8c8;">10</i><b style="left:547.71px;top:372.35px;width:48.69px;height:8.73px;background:#1a847e"></b><i style="left:548.51px;top:373.40px;color:#0a3a38;">Выход</i><i style="left:602.61px;top:373.40px;color:#c8c8c8;">11</i><b style="left:612.63px;top:372.35px;width:48.69px;height:8.73px;background:#1a847e"></b><i style="left:613.43px;top:373.40px;color:#0a3a38;">Модули</i><i style="left:667.53px;top:373.40px;color:#c8c8c8;">12</i><b style="left:677.55px;top:372.35px;width:59.51px;height:8.73px;background:#1a847e"></b><i style="left:678.35px;top:373.40px;color:#0a3a38;">Экран</i><b style="left:732.00px;top:354.00px;width:3.00px;height:3.00px;background:#3050d0"></b><b style="left:1.50px;top:388.80px;width:740.50px;height:10.20px;background:#1c3d42"></b><b style="left:1.50px;top:388.80px;width:740.50px;height:1.00px;background:#345f66"></b><u style="left:2.5px;top:389.5px;color:#c0d0d4;font-size:6.3px;line-height:9px;letter-spacing:-0.1px">Far.exe[6c8]:3384</u><u style="left:511px;top:389.5px;color:#98b0b4;font-size:6.3px;line-height:9px;word-spacing:1.5px">« ОБЩИЕ  97  2x1137  96  1960  2820x1376  1960x1084  84%</u></div>
</div>
<div class="lbl" style="left:780.7px;top:488px">Preview</div>

<div class="inp" style="left:17px;top:498px;width:386px;letter-spacing:0.08px">wss://test2.flashphoner.com:8443/f5b78c77</div>
<div class="a" style="left:433px;top:498px;width:53px;height:32px;border:1px solid #ccc;border-radius:4px;background:#fff;color:#333;line-height:32px;text-align:center">Stop</div>
<div class="a" style="left:180px;top:557px;width:200px;text-align:center;color:#3c763d;line-height:20px;letter-spacing:-0.6px;text-indent:-0.6px">PUBLISHING</div>
</body></html>
